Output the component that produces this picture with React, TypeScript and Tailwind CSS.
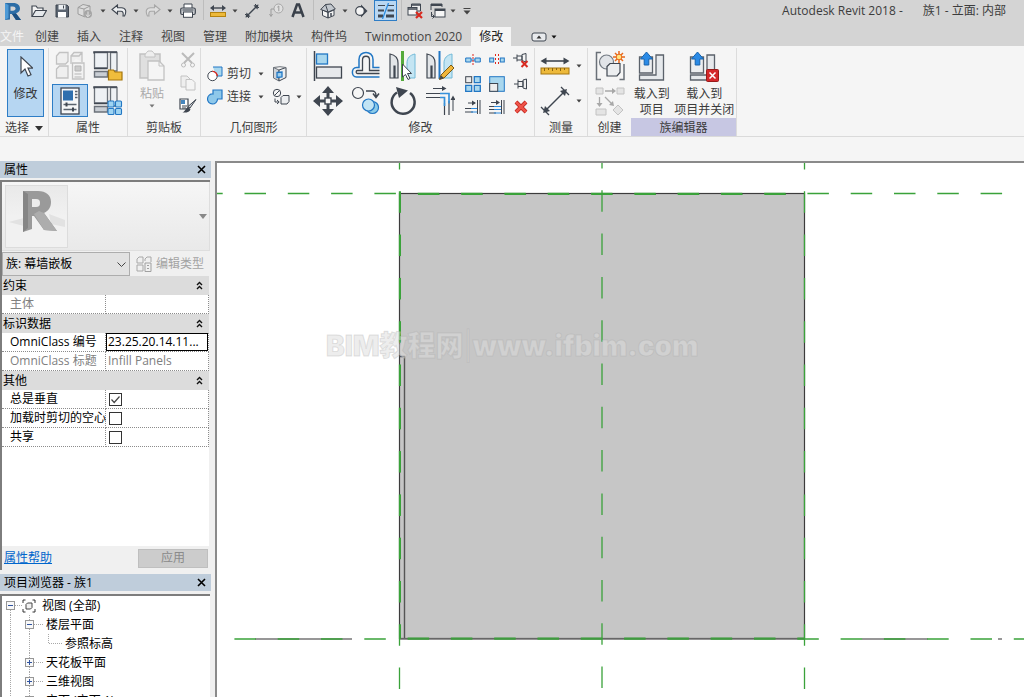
import type { ReactNode } from "react";

const INK = "#3f4650";
const BLUE = "#2277c4";
const SKY = "#a9d7ee";
const OFF = "#c2c2c2";

function Icon({ w = 30, h = 30, children }: { w?: number; h?: number; children: ReactNode }) {
  return (
    <svg width={w} height={h} viewBox={`0 0 ${w} ${h}`} fill="none" aria-hidden="true" className="block shrink-0">
      {children}
    </svg>
  );
}

function Caret({ color = "#444" }: { color?: string }) {
  return (
    <Icon w={6} h={4}>
      <path d="M0.5 0.5h5L3 3.5z" fill={color} />
    </Icon>
  );
}

function Slot({ className, label, children }: { className: string; label: string; children: ReactNode }) {
  return (
    <button type="button" aria-label={label} className={`flex h-[21px] shrink-0 items-center justify-center ${className}`}>
      {children}
    </button>
  );
}

function Divider({ className }: { className: string }) {
  return (
    <span className={`flex h-5 shrink-0 justify-center ${className}`}>
      <span className="w-px bg-[#bdbdbd]" />
    </span>
  );
}

const Ruler = ({ w }: { w: number }) => (
  <Icon w={w} h={w > 20 ? 22 : 14}>
    {w > 20 ? (
      <>
        <path d="M2 6h26" stroke={INK} strokeWidth="1.6" />
        <path d="M0.5 6l6-3.5v7zM29.500 6l-6-3.500v7z" fill={INK} />
        <rect x="1" y="13" width="28" height="6" fill="#edb93a" stroke="#a67610" />
        <path d="M4.500 13v3M8.500 13v2M12.500 13v3M16.500 13v2M20.500 13v3M24.500 13v2" stroke="#8a6310" />
      </>
    ) : (
      <>
        <path d="M2 4h12" stroke={INK} strokeWidth="1.4" />
        <path d="M0 4l4-3v6zM16 4l-4-3v6z" fill={INK} />
        <rect x="0.5" y="8.500" width="15" height="4" fill="#edb93a" stroke="#b5830f" />
      </>
    )}
  </Icon>
);

function QuickAccess() {
  return (
    <div className="flex h-[22px] items-start">
      <div className="flex">
        <Slot className="w-6" label="应用程序菜单">
          <Icon w={18} h={20}>
            <path d="M2 2h8c5 0 7 2.500 7 5.500 0 2.500-1.500 4-4 4.800L18 19h-5l-4-6H7v5.500L2 19z" fill="#2c6da6" />
            <path d="M2 2l3.500 2v13L2 19z" fill="#4d9ad6" />
            <path d="M7.500 5.500H10c1.500 0 2.500.7 2.500 2s-1 2.200-2.500 2.200H7.500z" fill="#d4d4d4" />
            <path d="M9 13l4 6h5l-5-6.500z" fill="#1c4f80" />
          </Icon>
        </Slot>
        <Slot className="w-[30px]" label="打开">
          <Icon w={16} h={14}>
            <path d="M1 12V2h4l1.500 2H12v2.500" stroke={INK} fill="#f4f4f4" strokeWidth="1.200" />
            <path d="M1 12.500L4.500 6.500H15.500L12 12.500z" stroke={INK} fill="#e6e9ec" strokeWidth="1.200" />
          </Icon>
        </Slot>
        <Slot className="w-4" label="保存">
          <Icon w={14} h={14}>
            <path d="M1 1h11l1.500 1.500V13H1z" fill="#5b6470" stroke={INK} />
            <rect x="3.500" y="1" width="7" height="4.500" fill="#eceff2" />
            <rect x="3" y="8" width="8" height="5.500" fill="#fff" />
            <path d="M8.500 1.500v3" stroke={INK} />
          </Icon>
        </Slot>
        <Slot className="w-[30px]" label="同步">
          <Icon w={16} h={16}>
            <path d="M1 4.500L6 1.500l7 1.500v6L8 14l-7-3z" fill="#dcdcdc" stroke="#9c9c9c" />
            <path d="M1 4.500l6 1.500 6-3M7 6v7.500" stroke="#9c9c9c" />
            <circle cx="11" cy="11" r="4" fill="#a5a5a5" />
            <path d="M11 8.500v5M8.800 11.500L11 13.700l2.200-2.200" stroke="#e5e5e5" />
          </Icon>
        </Slot>
        <Slot className="w-1.5" label="同步选项"><Caret /></Slot>
        <Slot className="w-[26px]" label="放弃">
          <Icon w={16} h={14}>
            <path d="M6.500 1L1 5.500 6.500 10V7.300h3.500c2 0 2.500 1.500 2 4.700h1.500c2.500-5 1-8.300-3-8.300H6.500z" fill="#eef0f2" stroke={INK} strokeWidth="1.100" />
          </Icon>
        </Slot>
        <Slot className="w-2" label="放弃选项"><Caret /></Slot>
        <Slot className="w-[26px]" label="重做">
          <Icon w={16} h={14}>
            <path d="M9.500 1L15 5.500 9.500 10V7.300H6c-2 0-2.500 1.500-2 4.700H2.500C0 7 1.500 3.700 5.500 3.700h4z" fill="#dedede" stroke="#a8a8a8" strokeWidth="1.100" />
          </Icon>
        </Slot>
        <Slot className="w-2" label="重做选项"><Caret /></Slot>
        <Slot className="w-7" label="打印">
          <Icon w={16} h={15}>
            <path d="M4 5V1h8v4" fill="#fff" stroke={INK} />
            <rect x="0.700" y="5" width="14.600" height="6.500" rx="1.500" fill="#c9ccd0" stroke={INK} strokeWidth="1.200" />
            <rect x="3.500" y="9" width="9" height="5.300" fill="#fff" stroke={INK} />
            <path d="M2.500 7h11" stroke={INK} />
          </Icon>
        </Slot>
        <Divider className="w-0.5" />
        <Slot className="w-7" label="测量"><Ruler w={16} /></Slot>
        <Slot className="w-1.5" label="测量选项"><Caret /></Slot>
        <Slot className="w-7" label="对齐尺寸标注">
          <Icon w={16} h={16}>
            <path d="M3 13L13 3" stroke={INK} strokeWidth="1.300" />
            <path d="M1 11l4 4M11 1l4 4" stroke={INK} />
            <path d="M1.500 14.500l1-5 4 4zM14.500 1.500l-1 5-4-4z" fill={INK} />
          </Icon>
        </Slot>
        <Slot className="w-5" label="按类别标记">
          <Icon w={15} h={15}>
            <circle cx="9.500" cy="5.500" r="4.500" stroke="#a6a6a6" fill="#e0e0e0" />
            <path d="M8.300 4.200L9.800 3v5.200M5 6H2v6.500M0.500 11L2 13.500 3.500 11" stroke="#9c9c9c" />
          </Icon>
        </Slot>
        <Slot className="w-6" label="文字">
          <Icon w={14} h={15}>
            <path d="M1.500 14L6 1.500h2L12.500 14M3.500 9.500h7" stroke="#3a414b" strokeWidth="2.500" />
          </Icon>
        </Slot>
        <Divider className="w-1.5" />
        <Slot className="w-6" label="默认三维视图">
          <Icon w={16} h={16}>
            <path d="M2.500 7L8 9.500V15l-5.500-2.500zM8 9.500L14 7v5.500L8 15z" fill="#f5f5f5" stroke={INK} />
            <path d="M0.700 6.500L5.500 1.500 11 1l4.300 5L8 9z" fill="#c3c8ce" stroke={INK} />
            <path d="M5.500 1.500L8 9" stroke={INK} />
            <path d="M11 10v3.500" stroke={INK} strokeWidth="1.500" />
          </Icon>
        </Slot>
        <Slot className="w-2.5" label="三维选项"><Caret /></Slot>
        <Slot className="w-[22px]" label="剖面">
          <Icon w={14} h={14}>
            <path d="M7 0.500l6.500 6.500L7 13.500z" fill={INK} />
            <circle cx="6" cy="7" r="4.300" fill="#f4f4f4" stroke={INK} strokeWidth="1.200" />
          </Icon>
        </Slot>
        <Slot className="mx-0.5 w-[23px] border border-[#2e7dc6] bg-[#b9d7f2]" label="细线">
          <Icon w={18} h={16}>
            <path d="M1 2.500h7M11 2.500h6" stroke={INK} />
            <path d="M1 7.500h6M10.500 7.500H17" stroke={INK} strokeWidth="2" />
            <path d="M1 13h5M9 13h8" stroke={INK} strokeWidth="3" />
            <path d="M11.500 0L5.500 16" stroke="#2a8be0" strokeWidth="1.300" />
          </Icon>
        </Slot>
        <Divider className="w-[5px]" />
        <Slot className="w-[22px]" label="关闭隐藏窗口">
          <Icon w={16} h={16}>
            <path d="M4.500 4V1h9v7h-3" stroke={INK} fill="#eee" />
            <rect x="1" y="4.500" width="9" height="7.500" fill="#f6f6f6" stroke={INK} />
            <path d="M1 6h9M4.500 2h9" stroke={INK} strokeWidth="1.500" />
            <path d="M9 9l6 6M15 9l-6 6" stroke="#d8291f" strokeWidth="2.200" />
          </Icon>
        </Slot>
        <Slot className="w-6" label="切换窗口">
          <Icon w={16} h={16}>
            <path d="M1 7V1h11v3" stroke={INK} />
            <path d="M1 2h11" stroke={INK} strokeWidth="2" />
            <rect x="5" y="6" width="10" height="8" fill="#f6f6f6" stroke={INK} />
            <path d="M5 7h10" stroke={INK} strokeWidth="2" />
            <path d="M1.500 9v4.500H4M2.500 11.500l2 2-2 2" stroke={INK} />
          </Icon>
        </Slot>
        <Slot className="w-1.5" label="窗口选项"><Caret /></Slot>
        <Slot className="w-[22px]" label="自定义快速访问工具栏">
          <Icon w={8} h={8}>
            <path d="M0.500 1.500h7" stroke="#444" />
            <path d="M0.500 3.500h7L4 7.500z" fill="#444" />
          </Icon>
        </Slot>
      </div>
      <div className="ml-auto flex h-[22px] items-center gap-5 pr-[18px] text-[#3c3c3c]">
        <span>Autodesk Revit 2018 -</span>
        <span>族1 - 立面: 内部</span>
      </div>
    </div>
  );
}

const TABS = ["创建", "插入", "注释", "视图", "管理", "附加模块", "构件坞", "Twinmotion 2020"];

function Tabs() {
  return (
    <nav className="flex h-6 items-end text-[#444]">
      <button type="button" className="h-[19px] w-[26px] text-left text-[#f4f4f4]">文件</button>
      {TABS.map((t) => (
        <button type="button" key={t} className="h-[19px] px-[9px]">{t}</button>
      ))}
      <button type="button" className="h-[19px] bg-[#f5f5f5] px-2 text-[#222]">修改</button>
      <button type="button" aria-label="最小化功能区" className="ml-5 flex h-[19px] items-center gap-1">
        <Icon w={16} h={10}>
          <rect x="1" y="1" width="14" height="8" rx="2" fill="#e8eaed" stroke={INK} />
          <path d="M5.500 6.500h5L8 3.500z" fill="#333" />
        </Icon>
        <Caret color="#111" />
      </button>
    </nav>
  );
}

function Group({ label, className = "", labelClass = "", children }: { label: ReactNode; className?: string; labelClass?: string; children: ReactNode }) {
  return (
    <section className={`flex shrink-0 flex-col border-r border-[#dcdcdc] ${className}`}>
      <div className="flex h-[70px]">{children}</div>
      <div className={`flex h-[18px] items-center justify-center gap-1.5 pt-0.5 text-[#3c3c3c] ${labelClass}`}>{label}</div>
    </section>
  );
}

function Tool({ label, className = "", children }: { label: string; className?: string; children: ReactNode }) {
  return (
    <button type="button" aria-label={label} className={`flex items-center justify-center ${className}`}>
      {children}
    </button>
  );
}

const Blocks = () => (
  <>
    <path d="M1.500 1.500h13V17h-13z" fill="#eef1f4" stroke="#6b7179" strokeWidth="1.300" />
    <path d="M17.500 1.500H24V20h-6.500z" fill="#eef1f4" stroke="#6b7179" strokeWidth="1.300" />
    <path d="M1 2.500V1h23M1 17.500h13.500" stroke={INK} strokeWidth="1.500" />
    <path d="M1.500 20.500h13v5.500h-13z" fill="#c9ced4" stroke="#6b7179" strokeWidth="1.400" />
  </>
);

const Tray = () => (
  <>
    <path d="M1.500 5h13v16h-13z" fill="#eceef0" stroke="#5b626b" strokeWidth="1.300" />
    <path d="M18 3h7.500v25h-24v-5H18z" fill="#e6e9ec" stroke="#5b626b" strokeWidth="1.300" />
    <path d="M8.500 0L14.500 7h-3.700v6H6.200V7H2.500z" fill="#2a8ae6" stroke="#1763ad" />
  </>
);

function Ribbon() {
  return (
    <div className="flex border-b border-[#dadada] bg-[#f5f5f5] pt-0.5">
      <Group
        className="w-[49px]"
        label={
          <>
            <span>选择</span>
            <Icon w={8} h={5}><path d="M0 0h8L4 5z" fill="#333" /></Icon>
          </>
        }
      >
        <button type="button" className="mt-px ml-[7px] flex h-[68px] w-[37px] flex-col items-center border border-[#2e7dc6] bg-[#b6d6f2] pt-1.5 text-[#333]">
          <Icon w={14} h={22}>
            <path d="M2 1v16l4-4 3 7 3-1.300-3-6.500h5z" fill="#fff" stroke={INK} strokeWidth="1.200" />
          </Icon>
          <span className="mt-2 leading-4">修改</span>
        </button>
      </Group>

      <Group className="w-[79px]" label="属性">
        <div className="grid grid-cols-[38px_38px] grid-rows-[35px_35px] pl-0.5">
          <Tool label="类型属性">
            <Icon>
              <path d="M1.500 5l3-3.500H13v9L10.500 13h-9zM16 5l3-3.500h8V11M1.500 18l3-3H13v12H1.500zM16 13V5h8l3-3.500" fill="#efefef" stroke={OFF} strokeWidth="1.300" />
              <path d="M17.500 12H29v16H17.500z" fill="#f2f2f2" stroke={OFF} strokeWidth="1.300" />
              <path d="M20 15h6v5h-6zM19.500 23h7M19.500 26h7" fill="#ccc" stroke="#b5b5b5" />
            </Icon>
          </Tool>
          <Tool label="族类型">
            <Icon>
              <Blocks />
              <path d="M15.500 19h5l1.500 2h7v8H15.500z" fill="#f0bd3c" stroke="#a5760c" strokeWidth="1.200" />
            </Icon>
          </Tool>
          <Tool label="属性" className="m-px border border-[#2e7dc6] bg-[#b6d6f2]">
            <Icon w={20} h={28}>
              <rect x="1" y="1" width="18" height="26" fill="#f6f7f8" stroke={INK} strokeWidth="1.300" />
              <rect x="3" y="3.500" width="10" height="10" fill="#2f6fae" />
              <path d="M15 4.500h2.500M15 7.500h2.500M15 10.500h2.500M3.500 17.500h13M3.500 22.500h13" stroke="#59626d" strokeWidth="1.300" />
              <path d="M6.500 15.500v4M13 20.500v4" stroke={INK} strokeWidth="2" />
            </Icon>
          </Tool>
          <Tool label="族类别">
            <Icon>
              <Blocks />
              <g fill="#9fd4f2" stroke={BLUE} strokeWidth="1.100">
                <rect x="15" y="15" width="6" height="6" rx="1" />
                <rect x="22.500" y="15" width="6" height="6" rx="1" />
                <rect x="15" y="22.500" width="6" height="6" rx="1" />
                <rect x="22.500" y="22.500" width="6" height="6" rx="1" />
              </g>
            </Icon>
          </Tool>
        </div>
      </Group>

      <Group className="w-[73px]" label="剪贴板">
        <button type="button" className="ml-2 flex w-8 flex-col items-center pt-0.5 text-[#aaa]">
          <Icon w={28} h={32}>
            <path d="M2 4h20v24H2z" fill="#dfdfdf" stroke={OFF} strokeWidth="1.500" />
            <path d="M7 5c0-2 2-2 3-4h4c1 2 3 2 3 4v2H7z" fill="#eee" stroke={OFF} />
            <path d="M10 11h11l5 5v14H10z" fill="#f5f5f5" stroke={OFF} strokeWidth="1.300" />
            <path d="M21 11v5h5" stroke={OFF} />
          </Icon>
          <span className="mt-1 mb-0.5 leading-4">粘贴</span>
          <Caret color="#777" />
        </button>
        <div className="ml-2 grid w-6 grid-rows-3">
          <Tool label="剪切">
            <Icon w={16} h={16}>
              <path d="M2 1l10 10M14 1L4 11" stroke="#bbb" strokeWidth="2" />
              <circle cx="3.500" cy="13" r="2" stroke="#bbb" /><circle cx="12.500" cy="13" r="2" stroke="#bbb" />
            </Icon>
          </Tool>
          <Tool label="复制">
            <Icon w={16} h={16}>
              <path d="M1 1h6l3 3v8H1z" fill="#eee" stroke={OFF} />
              <path d="M6 4.500h6l3 3V15H6z" fill="#f4f4f4" stroke={OFF} />
            </Icon>
          </Tool>
          <Tool label="匹配类型属性">
            <Icon w={18} h={18}>
              <path d="M1 2h8v10H1z" fill="#fff" stroke={INK} strokeWidth="1.200" />
              <path d="M2 3h4v4H2z" fill="#4686bd" />
              <path d="M3 9h5M3 11h4" stroke={INK} />
              <path d="M17 2.500L11 11l-2-1.500z" fill="#cfd3d8" stroke={INK} />
              <path d="M9 10l2.500 2c-.5 3-4 4-8 3.500 3-1 3-4.500 5.500-5.500z" fill={INK} />
            </Icon>
          </Tool>
        </div>
      </Group>

      <Group className="w-[106px]" label="几何图形">
        <div className="flex flex-col justify-center pt-1 pl-1.5">
          <div className="flex h-[23px] items-center">
            <button type="button" className="flex items-center gap-1 text-[#3c3c3c]">
              <Icon w={16} h={16}>
                <path d="M6 1h9v9H9" fill={SKY} stroke={BLUE} />
                <circle cx="5.500" cy="10" r="4.700" fill="#fff" stroke={INK} />
                <path d="M5.500 5.300a4.700 4.700 0 014.700 4.700" stroke="#e0261c" strokeWidth="1.300" />
              </Icon>
              剪切
            </button>
            <Tool label="剪切选项" className="ml-[7px]"><Caret /></Tool>
            <Tool label="拆分面" className="ml-2">
              <Icon w={16} h={16}>
                <path d="M1.500 1.500L7 4v11L1.500 12z" fill="#cfd3d8" stroke="#6b7179" />
                <path d="M7 4l7-2.500v10L7 15z" fill="#eceef0" stroke={INK} />
                <path d="M1.500 1.500L8 .7l6 .8" stroke="#6b7179" />
                <path d="M5 6.500l5-.5v5l-5 .5z" fill="#9fd0ee" stroke={BLUE} strokeWidth="1.300" />
              </Icon>
            </Tool>
          </div>
          <div className="flex h-[23px] items-center">
            <button type="button" className="flex items-center gap-1 text-[#3c3c3c]">
              <Icon w={16} h={16}>
                <path d="M6 1h9v9h-4.500a5 5 0 11-4.500-5z" fill="#8ec8ea" stroke={BLUE} strokeWidth="1.200" />
              </Icon>
              连接
            </button>
            <Tool label="连接选项" className="ml-[7px]"><Caret /></Tool>
            <Tool label="填色" className="ml-2">
              <Icon w={18} h={18}>
                <circle cx="5" cy="5" r="3.700" stroke={INK} /><path d="M2.500 7.500l5-5" stroke={INK} />
                <path d="M9 9.500l2-2h6v6l-2 2.500H9z" fill="#eceef0" stroke={INK} />
                <path d="M3 10.500V14h4M5 12l2.200 2L5 16" stroke={INK} />
              </Icon>
            </Tool>
            <Tool label="填色选项" className="ml-1.5"><Caret /></Tool>
          </div>
        </div>
      </Group>

      <Group className="w-[228px]" label="修改">
        <div className="grid grid-cols-[38px_38px_36px_38px] grid-rows-[35px_35px] pl-0.5">
          <Tool label="对齐">
            <Icon>
              <path d="M1.500 0v30" stroke={INK} strokeWidth="1.500" />
              <rect x="3.500" y="3" width="11" height="10" fill={SKY} stroke={BLUE} strokeWidth="1.300" />
              <rect x="3.500" y="16" width="25" height="11" fill="#e7e9ec" stroke={INK} strokeWidth="1.300" />
            </Icon>
          </Tool>
          <Tool label="偏移">
            <Icon>
              <path d="M28.500 26H5.500c-5.500 0-5.500-9.500 0-9.500H8V8.500c0-9.500 14-9.500 14 0v8h6.500" stroke={BLUE} strokeWidth="1.500" />
              <path d="M28.500 22.500H6.500c-1.800 0-1.800-3 0-3H11.500V9c0-5 7-5 7 0v10.500h10" stroke={INK} strokeWidth="1.300" />
            </Icon>
          </Tool>
          <Tool label="镜像 - 拾取轴">
            <Icon>
              <path d="M2 3c5 1 8 4 8 9v15H7V15H6v12H2z" fill="#e2e5e8" stroke={INK} strokeWidth="1.200" />
              <path d="M27 3c-5 1-8 4-8 9v15h8z" fill="#c4e5f3" stroke="#72bad8" />
              <path d="M14.500 0v30" stroke="#55aa3c" strokeWidth="3" />
              <path d="M14.500 13v13l3-2.500 2.500 5 2-1-2.500-5h4z" fill="#fff" stroke={INK} />
            </Icon>
          </Tool>
          <Tool label="镜像 - 绘制轴">
            <Icon>
              <path d="M2 3c5 1 8 4 8 9v15H7V15H6v12H2z" fill="#e2e5e8" stroke={INK} strokeWidth="1.200" />
              <path d="M27 3c-5 1-8 4-8 9v15h8z" fill="#c4e5f3" stroke="#72bad8" />
              <path d="M14.500 0v28" stroke={BLUE} strokeWidth="2" />
              <path d="M16 24L26 14l3 3-10 10-4.500 1.500z" fill="#f0b63a" stroke="#7a5a18" />
              <path d="M14.500 28.500l1.500-4 3 2.500z" fill={INK} />
            </Icon>
          </Tool>
          <Tool label="移动">
            <Icon>
              <path d="M15 5v20M5 15h20" stroke={INK} strokeWidth="3" />
              <path d="M15 0l6 7H9zM15 30l6-7H9zM0 15l7-6v12zM30 15l-7-6v12z" fill={INK} />
              <rect x="12" y="12" width="6" height="6" fill="#f6f6f6" stroke={INK} strokeWidth="1.400" />
            </Icon>
          </Tool>
          <Tool label="复制">
            <Icon>
              <circle cx="7" cy="7" r="5.500" fill="#f6f6f6" stroke={INK} strokeWidth="1.200" />
              <path d="M15 5h6c3 0 4 1 4 5M22 7.500l3 4 3-4" stroke={INK} strokeWidth="1.500" />
              <circle cx="21.500" cy="21.500" r="6" fill="#8ccbe8" stroke={BLUE} strokeWidth="1.200" />
              <circle cx="17.500" cy="19" r="6" fill="#c1e4f4" stroke={BLUE} strokeWidth="1.200" />
            </Icon>
          </Tool>
          <Tool label="旋转">
            <Icon>
              <path d="M9 6.500A11.500 11.500 0 1022 7" stroke={INK} strokeWidth="2.500" />
              <path d="M8 1l12 3.500L11 12z" fill={INK} />
            </Icon>
          </Tool>
          <Tool label="修剪/延伸为角">
            <Icon>
              <path d="M1 7.500h17M1 11.500h15M19.500 17v12M24 15v14" stroke={INK} strokeWidth="1.200" />
              <path d="M15 7.500h9v10M15 11.500h4.500V20" stroke="#3590da" strokeWidth="1.700" />
              <path d="M8 2.500h11M28 13v12" stroke={INK} />
              <path d="M21.500 2.500L17 0v5zM28 9.500L25.500 14h5z" fill={INK} />
            </Icon>
          </Tool>
        </div>
        <div className="ml-0.5 grid grid-cols-3 grid-rows-[24px_23px_23px]">
          <Tool label="拆分图元" className="w-6">
            <Icon w={16} h={14}>
              <path d="M0.700 5H6v4H.7zM10 5h5.300v4H10z" fill={SKY} stroke={BLUE} /><path d="M6 7h4" stroke={BLUE} /><path d="M8 1v12" stroke="#e0261c" strokeDasharray="2 1" />
            </Icon>
          </Tool>
          <Tool label="用间隙拆分" className="w-6">
            <Icon w={16} h={14}>
              <rect x="0.700" y="5" width="4" height="4" fill={SKY} stroke={BLUE} /><rect x="11.300" y="5" width="4" height="4" fill={SKY} stroke={BLUE} /><path d="M6.500 1v12M9.500 1v12" stroke="#e0261c" strokeDasharray="2 2" />
            </Icon>
          </Tool>
          <Tool label="解锁" className="w-6">
            <Icon w={16} h={16}>
              <path d="M0 6h4M4 2.500v7M4 4h5v4H4M9 2.500l4-1V10L9 8.500z" stroke={INK} />
              <path d="M8.500 9l6 6M14.500 9l-6 6" stroke="#d8291f" strokeWidth="2" />
            </Icon>
          </Tool>
          <Tool label="阵列" className="w-6">
            <Icon w={16} h={16}>
              <rect x="0.700" y="0.700" width="6" height="6" stroke={INK} fill="#eee" />
              <path d="M9.300.7h6v6h-6zM.7 9.300h6v6h-6zM9.300 9.300h6v6h-6z" fill={SKY} stroke={BLUE} strokeWidth="1.300" />
            </Icon>
          </Tool>
          <Tool label="缩放" className="w-6">
            <Icon w={16} h={16}>
              <rect x="0.700" y="0.700" width="14.600" height="14.600" fill={SKY} stroke={BLUE} />
              <rect x="0.700" y="7.500" width="8" height="7.800" fill="#eee" stroke={INK} />
            </Icon>
          </Tool>
          <Tool label="锁定" className="w-6">
            <Icon w={14} h={12}>
              <path d="M0 6h4M4 1.500v9M4 3.500h5v5H4M9 2l3.500-1v10L9 10z" stroke={INK} fill="#eee" />
            </Icon>
          </Tool>
          <Tool label="修剪/延伸单个图元" className="w-6">
            <Icon w={16} h={16}>
              <path d="M12.500 1v14M15 1v14M0 9.500h8M0 13h8M3 4h7" stroke={INK} /><path d="M6 9.500h6M6 13h6" stroke="#2a8be0" /><path d="M7 1.500L11 4 7 6.500z" fill={INK} />
            </Icon>
          </Tool>
          <Tool label="修剪/延伸多个图元" className="w-6">
            <Icon w={16} h={16}>
              <path d="M12.500 1v14M15 1v14M0 7.500h7M0 10.500h7M0 14h7M2 3.500h7" stroke={INK} /><path d="M5 7.500h7M5 10.500h7M5 14h7" stroke="#2a8be0" /><path d="M7 1L11 3.500 7 6z" fill={INK} />
            </Icon>
          </Tool>
          <Tool label="删除" className="w-6">
            <Icon w={14} h={14}>
              <path d="M2 2l10 10M12 2L2 12" stroke="#b8211a" strokeWidth="4" /><path d="M2 2l10 10M12 2L2 12" stroke="#ef5348" strokeWidth="2.500" />
            </Icon>
          </Tool>
        </div>
      </Group>

      <Group className="w-[53px]" label="测量">
        <div className="grid grid-cols-[32px_16px] grid-rows-[35px_35px] pl-1">
          <Tool label="测量两点之间距离"><Ruler w={30} /></Tool>
          <Tool label="测量选项"><Caret /></Tool>
          <Tool label="对齐尺寸标注">
            <Icon>
              <path d="M5 25L25 5" stroke={INK} strokeWidth="1.500" />
              <path d="M1 21l8 8M21 1l8 8" stroke={INK} strokeWidth="1.300" />
              <path d="M3 27l2-7 5 5zM27 3l-2 7-5-5z" fill={INK} />
            </Icon>
          </Tool>
          <Tool label="尺寸标注选项"><Caret /></Tool>
        </div>
      </Group>

      <Group className="w-[43px] border-r-0" label="创建">
        <div className="grid w-full grid-rows-[35px_35px]">
          <Tool label="创建组">
            <Icon>
              <path d="M6 1.500H1.500v27H6M24.500 28.500H29V13" stroke="#6a7078" strokeWidth="1.500" />
              <circle cx="11.500" cy="11" r="7" fill="#e1e4e8" stroke="#737a83" strokeWidth="1.200" />
              <path d="M12 15.500l3-3h10v9L22 25H12z" fill="#eceef0" stroke={INK} strokeWidth="1.200" />
              <path d="M24 0v12M18 6h12M20 2l8 8M28 2l-8 8" stroke="#e8681c" strokeWidth="1.500" /><circle cx="24" cy="6" r="2.800" fill="#ffe682" stroke="#e8681c" />
            </Icon>
          </Tool>
          <Tool label="创建类似实例">
            <Icon>
              <path d="M1 2h7v6H1zM22 2h7v6h-7zM1 23h10v6H1zM23 19l5 5-5 5-5-5z" fill="#e4e4e4" stroke={OFF} />
              <path d="M10 5h9M4.500 11v8M10 11l7 7" stroke="#a8a8a8" strokeWidth="1.300" />
              <path d="M21 5l-4-3v6zM4.500 21l-3-4h6zM19 20l-5-1 4-4z" fill="#a8a8a8" />
            </Icon>
          </Tool>
        </div>
      </Group>

      <Group className="w-[106px]" label="族编辑器" labelClass="bg-[#c7c7e3]">
        <button type="button" className="flex w-[42px] flex-col items-center pt-1 leading-4 text-[#3c3c3c]">
          <Icon w={28} h={30}><Tray /></Icon>
          <span className="mt-1 whitespace-nowrap">载入到</span>
          <span>项目</span>
        </button>
        <button type="button" className="flex w-16 flex-col items-center pt-1 leading-4 text-[#3c3c3c]">
          <Icon w={30} h={30}>
            <Tray />
            <rect x="17.500" y="17.500" width="12" height="12" rx="1" fill="#d5282a" stroke="#971b1b" />
            <path d="M20.500 20.500l6 6M26.500 20.500l-6 6" stroke="#fff" strokeWidth="1.500" />
          </Icon>
          <span className="mt-1">载入到</span>
          <span className="whitespace-nowrap">项目并关闭</span>
        </button>
      </Group>
    </div>
  );
}

function PanelTitle({ children }: { children: ReactNode }) {
  return (
    <div className="flex h-[17px] w-[211px] shrink-0 items-center justify-between bg-[#bfcddb] pr-[5px] pl-1 text-black">
      <h2>{children}</h2>
      <button type="button" aria-label="关闭">
        <Icon w={9} h={9}><path d="M1 1l7 7M8 1L1 8" stroke="#000" strokeWidth="1.600" /></Icon>
      </button>
    </div>
  );
}

function SectionRow({ title }: { title: string }) {
  return (
    <tr className="h-[19px] bg-[#dcdcdc]">
      <th colSpan={2} scope="colgroup" className="p-0 font-normal">
        <div className="flex items-center justify-between pr-1.5 pl-px">
          <span>{title}</span>
          <Icon w={7} h={9}><path d="M1 4l2.500-2.500L6 4M1 8l2.500-2.500L6 8" stroke="#111" strokeWidth="1.400" /></Icon>
        </div>
      </th>
    </tr>
  );
}

function PropRow({ id, label, muted = false, children }: { id: string; label: string; muted?: boolean; children?: ReactNode }) {
  return (
    <tr className={`h-[19px] ${muted ? "text-[#808080]" : "text-black"}`}>
      <td className="w-[104px] border-r border-b border-dotted border-[#8c8c8c] p-0 pl-2 whitespace-nowrap">
        <label htmlFor={id}>{label}</label>
      </td>
      <td className="border-r border-b border-dotted border-[#8c8c8c] p-0">{children}</td>
    </tr>
  );
}

function Check({ id, checked = false }: { id: string; checked?: boolean }) {
  return (
    <span className="relative ml-[3px] block size-[13px]">
      <input id={id} type="checkbox" defaultChecked={checked} className="peer block size-[13px] appearance-none border border-[#333] bg-white" />
      <svg viewBox="0 0 13 13" className="pointer-events-none absolute inset-0 hidden size-[13px] peer-checked:block" fill="none">
        <path d="M2.500 6.500l2.700 3L10.500 3.500" stroke="#444" strokeWidth="1.200" />
      </svg>
    </span>
  );
}

function Properties() {
  return (
    <section className="flex min-h-0 flex-[413] flex-col">
      <PanelTitle>属性</PanelTitle>
      <div className="mt-0.5 mb-1 flex w-[210px] min-h-0 flex-1 flex-col border-t-2 border-l-2 border-[#7d7d7d] bg-[#f0f0f0]">
        <div className="flex h-[69px] shrink-0 items-center justify-between border-r border-b border-[#dedede] bg-gradient-to-b from-[#f6f6f6] to-[#e9e9e9] pr-0.5 pl-[3px]">
          <div className="flex size-[63px] items-center justify-center border border-[#dcdcdc] bg-gradient-to-b from-[#e9e9e9] via-[#f1f1f1] to-[#f1f1f1]">
            <Icon w={56} h={56}>
              <path d="M0 34l15-4v8L0 34zM40 26l16 6v7l-14-3z" fill="#e2e2e2" />
              <path d="M14 3h15c8 0 13 4 13 11 0 6-3 9-7 11l13 18-13-1-10-14h-2v13l-9 3z" fill="#9a9a9a" />
              <path d="M14 3l5 3v34l-5 4z" fill="#858585" />
              <path d="M25 26l10 16 13 1-13-18-5-2z" fill="#adadad" />
              <path d="M23 11h4c3 0 4 1.500 4 4s-1 4-4 4h-4z" fill="#ececec" />
            </Icon>
          </div>
          <button type="button" aria-label="类型选择器"><Icon w={8} h={5}><path d="M0 0h8L4 5z" fill="#888" /></Icon></button>
        </div>
        <div className="flex h-[25px] shrink-0 items-center">
          <div className="relative">
            <select aria-label="族" className="block h-6 w-[128px] appearance-none border border-[#adadad] bg-[#e2e2e2] pl-[3px] text-black">
              <option>族: 幕墙嵌板</option>
            </select>
            <svg viewBox="0 0 9 6" className="pointer-events-none absolute top-2.5 right-1 h-1.5 w-[9px]" fill="none">
              <path d="M0.500 0.500l4 4 4-4" stroke="#444" />
            </svg>
          </div>
          <button type="button" className="ml-1.5 flex items-center gap-1 text-[#a3a3a3]">
            <Icon w={16} h={16}>
              <path d="M1 3l2-2h4v6H1zM9 3l2-2h4v5M1 9h6v6H1zM9 5V3" stroke="#a8a8a8" />
              <path d="M9 7h6v8.500H9zM11 9.500h2M11 12.500h2" stroke="#a0a0a0" />
            </Icon>
            编辑类型
          </button>
        </div>
        <div className="min-h-0 w-[207px] flex-1 overflow-hidden bg-white">
          <table className="w-full table-fixed border-separate border-spacing-0 text-left leading-[18px]">
            <colgroup><col className="w-[104px]" /><col /></colgroup>
            <tbody>
              <SectionRow title="约束" />
              <PropRow id="host" label="主体" muted />
              <SectionRow title="标识数据" />
              <PropRow id="omni-number" label="OmniClass 编号">
                <input id="omni-number" defaultValue="23.25.20.14.11..." className="block h-[18px] w-full border border-black bg-white pl-px outline-none" />
              </PropRow>
              <PropRow id="omni-title" label="OmniClass 标题" muted>
                <output id="omni-title" className="block pl-0.5">Infill Panels</output>
              </PropRow>
              <SectionRow title="其他" />
              <PropRow id="vertical" label="总是垂直"><Check id="vertical" checked /></PropRow>
              <PropRow id="void-cut" label="加载时剪切的空心"><Check id="void-cut" /></PropRow>
              <PropRow id="shared" label="共享"><Check id="shared" /></PropRow>
            </tbody>
          </table>
        </div>
        <div className="flex h-6 shrink-0 items-center justify-between pr-0.5 pl-0.5">
          <a href="#help" className="text-[#0066cc] underline">属性帮助</a>
          <button type="button" className="h-[19px] w-[70px] border border-[#bfbfbf] bg-[#cccccc] text-[#8a8a8a]">应用</button>
        </div>
      </div>
    </section>
  );
}

type Node = { text: string; level: number; open?: boolean; leaf?: boolean };
const TREE: Node[] = [
  { text: "视图 (全部)", level: 0, open: true },
  { text: "楼层平面", level: 1, open: true },
  { text: "参照标高", level: 2, leaf: true },
  { text: "天花板平面", level: 1 },
  { text: "三维视图", level: 1 },
  { text: "立面 (立面 1)", level: 1 },
];

function TreeRow({ node }: { node: Node }) {
  const cells = Array.from({ length: node.level + 1 }, (_, i) => i);
  return (
    <li className="flex h-[19px] items-center whitespace-nowrap">
      {cells.map((i) => {
        const last = i === node.level;
        return (
          <svg key={i} width="19" height="19" viewBox="0 0 19 19" fill="none" className="shrink-0 overflow-visible">
            <path
              d={last && node.leaf ? "M8.500 0v9.500" : last && node.level === 0 ? "M8.500 10v9" : "M8.500 0v19"}
              stroke="#a8a8a8"
              strokeDasharray="1 1"
            />
            {last && <path d={node.level === 0 ? "M9 9.500h11" : "M9 9.500h14"} stroke="#a8a8a8" strokeDasharray="1 1" />}
            {last && !node.leaf && (
              <>
                <rect x="4.500" y="5.500" width="8" height="8" fill="#f8f8f8" stroke="#979797" />
                <path d={node.open ? "M6 9.500h5" : "M6 9.500h5M8.500 7v5"} stroke="#3054a0" />
              </>
            )}
          </svg>
        );
      })}
      {node.level === 0 && (
        <span className="ml-px">
          <Icon w={14} h={14}>
            <path d="M3.500 1H1v3M10.500 1H13v3M3.500 13H1v-3M10.500 13H13v-3" stroke="#333" />
            <path d="M4 5.500L5.500 4H10v4.500L8.500 10H4z" stroke="#444" fill="#f2f2f2" />
          </Icon>
        </span>
      )}
      <span className="ml-1.5">{node.text}</span>
    </li>
  );
}

function Browser() {
  return (
    <section className="flex min-h-0 flex-[123] flex-col">
      <PanelTitle>项目浏览器 - 族1</PanelTitle>
      <ul className="mt-[3px] min-h-0 w-[210px] flex-1 overflow-hidden border-t-2 border-l-2 border-[#7d7d7d] bg-white text-black">
        {TREE.map((n) => <TreeRow key={n.text} node={n} />)}
      </ul>
    </section>
  );
}

function Elevation() {
  const dash = "21.5 21.8";
  return (
    <main className="relative min-w-0 flex-1 overflow-hidden border-t-2 border-l-2 border-[#8a8a8a] bg-white">
      <svg viewBox="217 163 807 534" preserveAspectRatio="xMinYMin meet" className="block h-full w-full" fill="none" role="img" aria-label="立面: 内部">
        <rect x="399.500" y="193.500" width="405" height="445" fill="#c6c6c6" stroke="#3c3c3c" strokeWidth="1.200" />
        <path d="M399.500 356.500h5v282" stroke="#555" strokeWidth="1.400" />
        <path d="M255 639h97M399 639h405M862 639h66M998 639h4" stroke="#757575" strokeWidth="1.500" />
        <g stroke="#3aa23a" strokeWidth="1.300" strokeDasharray={dash}>
          <path d="M201.200 193.500H1003" />
          <path d="M234.400 639H1024" />
          <path d="M399.500 148V690" />
          <path d="M602 147V689" />
          <path d="M804.500 148V690" />
        </g>
        <g stroke="#3aa23a" strokeDasharray={dash}>
          <path d="M418 194.500H804" />
          <path d="M407.600 638H804" />
          <path d="M400.500 191.300V639" />
        </g>
      </svg>
      <p className="pointer-events-none absolute top-[163px] left-[109px] font-['Inter','Noto_Sans_CJK_SC',sans-serif] text-[28px] leading-10 font-black whitespace-nowrap text-[#dcdcdc]/50 [-webkit-text-stroke:1px_rgba(165,165,165,0.3)]">
        BIM教程网<span className="font-light">|</span>www.ifbim.com
      </p>
    </main>
  );
}

export default function App() {
  return (
    <div className="flex h-screen flex-col overflow-hidden bg-[#f0f0f0] font-['Open_Sans','Noto_Sans_CJK_SC',sans-serif] text-xs">
      <header className="shrink-0 bg-[#d4d4d4]">
        <QuickAccess />
        <Tabs />
        <Ribbon />
        <div className="h-6 bg-[#f5f5f5]" />
      </header>
      <div className="flex min-h-0 flex-1">
        <aside className="flex w-[215px] shrink-0 flex-col">
          <Properties />
          <Browser />
        </aside>
        <Elevation />
      </div>
    </div>
  );
}
